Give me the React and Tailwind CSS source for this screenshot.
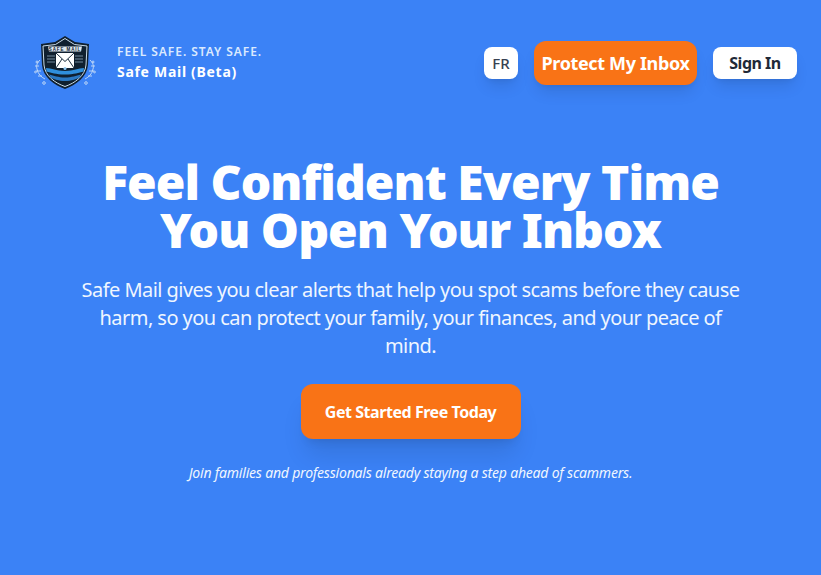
function Logo() {
  return (
    <svg viewBox="0 0 64 64" className="w-[64px] h-[64px] shrink-0">
      {/* side swirls */}
      <g fill="none" stroke="#c6dcf7" strokeWidth="0.9">
        <path d="M7 29c-3 3-4 6-3 9 1 5 4 8 8 10" />
        <path d="M57 29c3 3 4 6 3 9-1 5-4 8-8 10" />
        <path d="M2 35h4M3 40h5M5 45h4M62 35h-4M61 40h-5M59 45h-4" />
        <circle cx="4" cy="31" r="1" />
        <circle cx="60" cy="31" r="1" />
        <circle cx="2.500" cy="41" r="0.9" />
        <circle cx="61.500" cy="41" r="0.9" />
        <circle cx="11" cy="52" r="1.300" />
        <circle cx="53" cy="52" r="1.300" />
      </g>
      {/* shield */}
      <path d="M32 5 42 11 56 13 55 34C54 46 43 54 32 58 21 54 10 46 9 34L8 13 22 11Z" fill="#10202f" />
      <path d="M32 7.500 41.500 13.500 54 15 53 34C52 45 42 52 32 55.500 22 52 12 45 11 34L10 15 22.500 13.500Z" fill="none" stroke="#c9dbe8" strokeWidth="1" />
      {/* banner */}
      <path d="M15 15.500 49 15.500 48 20.500 16 20.500Z" fill="#dfe8ef" />
      <text x="32" y="19.700" textAnchor="middle" fontSize="4.500" fontWeight="700" letterSpacing="0.9" fill="#10202f" fontFamily="'Liberation Sans', sans-serif">SAFE MAIL</text>
      {/* stripes */}
      <path d="M14 25h8M14 28h8M14 31h8M42 25h8M42 28h8M42 31h8" stroke="#7f97aa" strokeWidth="0.9" />
      {/* envelope */}
      <rect x="23" y="22" width="18" height="15" fill="#ffffff" />
      <path d="M23 22 32 30.500 41 22M23 37 29 28M41 37 35 28" fill="none" stroke="#1a2c3c" strokeWidth="1" />
      {/* waves */}
      <path d="M13 37c6 0 10 3 19 3s13-3 19-3l-.5 3.500c-5 1-9 3-18.500 3s-13.500-2-18.500-3Z" fill="#2f8fdc" />
      <path d="M16 43.500c5 1 9 3 16 3s11-2 16-3l-2 3.500c-4 1-7 3-14 3s-10-2-14-3Z" fill="#2a78c2" />
      <circle cx="32" cy="37.500" r="1.500" fill="#8cc6f0" />
    </svg>
  );
}

export default function App() {
  return (
    <div className="min-h-[575px] bg-[#3b82f6] text-white font-['Noto_Sans',sans-serif]">
      <header className="flex items-center justify-between pl-[33px] pr-6 pt-[31px]">
        <div className="flex items-center gap-[20px]">
          <Logo />
          <div className="flex flex-col gap-[2px] -mt-[1px]">
            <span className="text-xs font-semibold tracking-[0.95px] text-[#dbeafe]">FEEL SAFE. STAY SAFE.</span>
            <span className="text-sm font-bold tracking-[0.7px]">Safe Mail (Beta)</span>
          </div>
        </div>
        <div className="flex items-center gap-4">
          <button className="h-8 w-[34px] rounded-lg bg-white text-[15px] font-medium text-[#374151] shadow-lg">FR</button>
          <button className="h-11 w-[163px] rounded-xl bg-[#f97316] text-lg font-bold tracking-[-0.36px] text-white shadow-lg">Protect My Inbox</button>
          <button className="h-8 w-[84px] rounded-lg bg-white text-base font-bold tracking-[-0.5px] text-[#1f2937] shadow-lg">Sign In</button>
        </div>
      </header>

      <main className="flex flex-col items-center text-center pt-[63px] px-6">
        <h1 className="text-5xl font-black tracking-[-0.97px]">
          Feel Confident Every Time
          <br />
          You Open Your Inbox
        </h1>
        <p className="mt-[22px] max-w-[672px] text-xl leading-7 tracking-[-0.55px] text-[#eff6ff]">
          Safe Mail gives you clear alerts that help you spot scams before they cause harm, so you can protect your family, your finances, and your peace of mind.
        </p>
        <button className="mt-6 h-[55px] w-[220px] rounded-xl bg-[#f97316] text-base font-bold tracking-[-0.45px] text-white shadow-xl">Get Started Free Today</button>
        <p className="mt-6 text-sm italic tracking-[-0.2px] text-[#eff6ff]">Join families and professionals already staying a step ahead of scammers.</p>
      </main>
    </div>
  );
}
